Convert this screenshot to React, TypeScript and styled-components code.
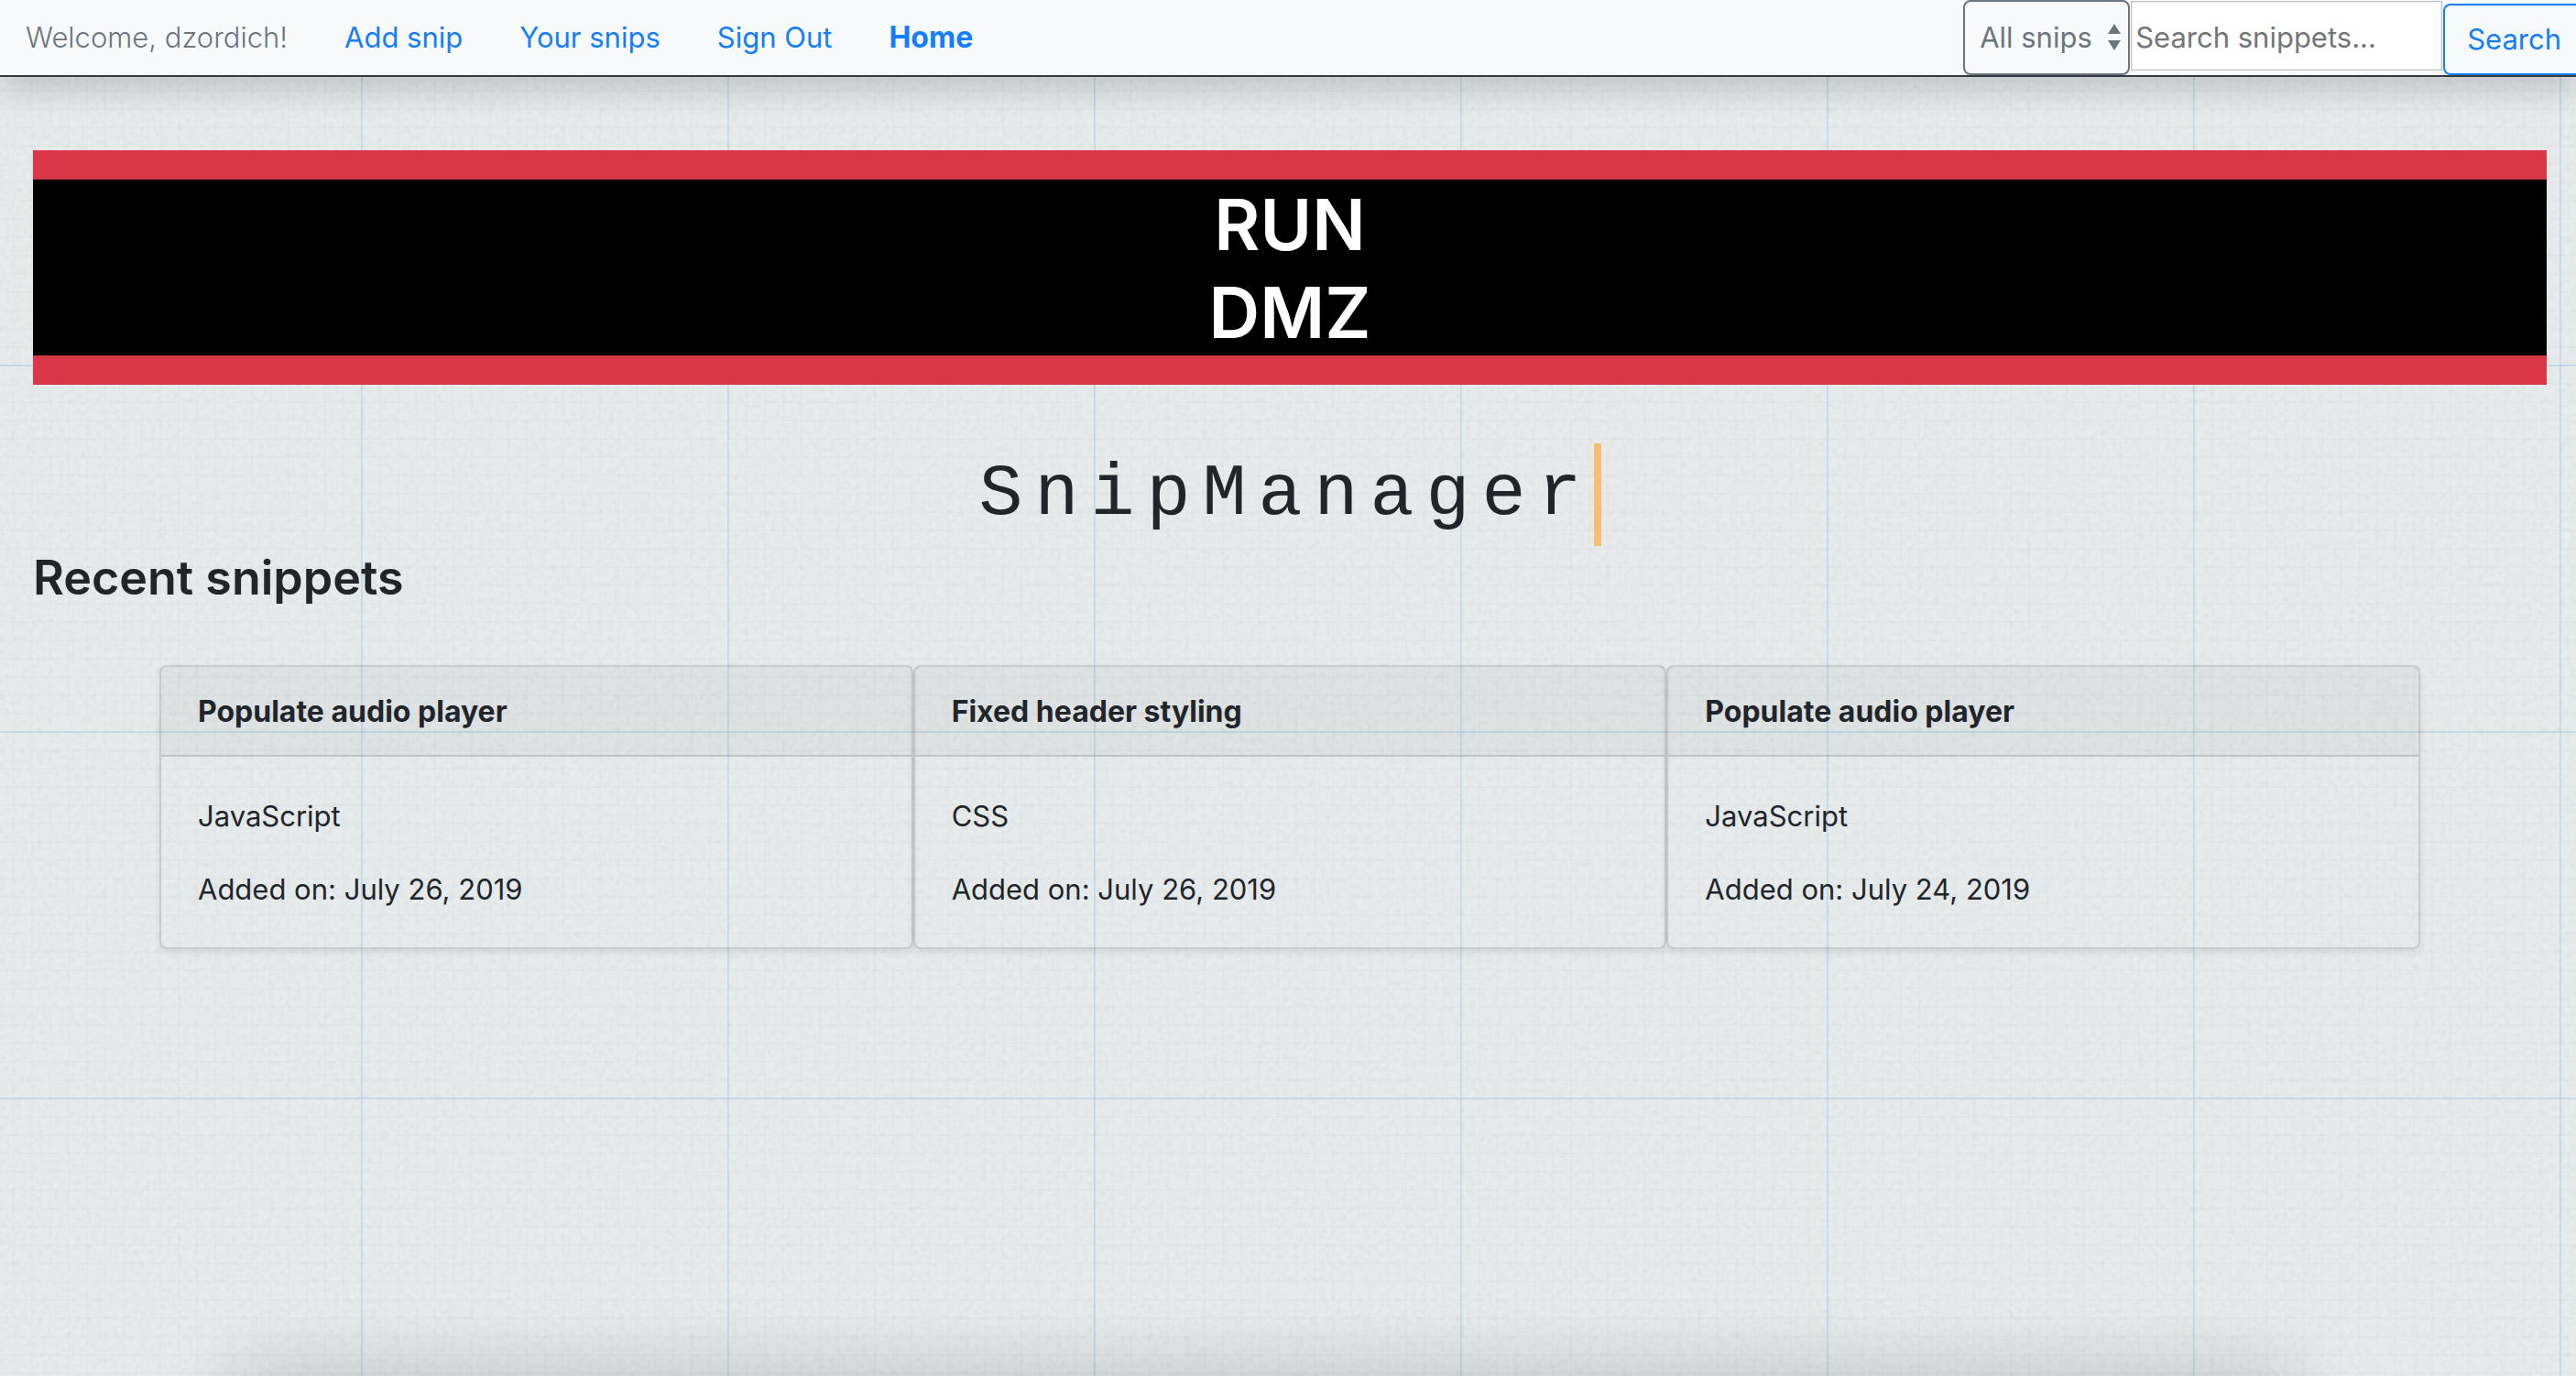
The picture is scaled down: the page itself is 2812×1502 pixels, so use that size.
import React from 'react';
import styled, { createGlobalStyle } from 'styled-components';

const GlobalStyle = createGlobalStyle`
  *, *::before, *::after { box-sizing: border-box; }
  body {
    margin: 0;
    color: #212529;
    font-family: Inter, "Liberation Sans", sans-serif;
    font-size: 31px;
    line-height: 48px;
    background-color: #e7ebec;
  }
`;

const Page = styled.div`
  display: flex;
  flex-direction: column;
  position: relative;
  isolation: isolate;
  min-height: 100vh;
  overflow: hidden;
  background-image:
    linear-gradient(to right, rgba(150, 195, 230, 0.35) 2px, transparent 2px),
    linear-gradient(to bottom, rgba(150, 195, 230, 0.4) 2px, transparent 2px),
    linear-gradient(to right, rgba(120, 140, 150, 0.03) 2px, transparent 2px),
    linear-gradient(to bottom, rgba(120, 140, 150, 0.04) 2px, transparent 2px);
  background-size: 400px 400px, 400px 400px, 20px 20px, 20px 20px;
  background-position: 394px 0, 0 398px, 14px 0, 0 18px;
`;

const PaperGrain = styled.svg`
  position: absolute;
  inset: 0;
  z-index: -1;
  width: 100%;
  height: 100%;
  pointer-events: none;
`;

const Navbar = styled.nav`
  display: flex;
  align-items: flex-start;
  justify-content: space-between;
  padding-left: 28px;
  background: #f8f9fa;
  border-bottom: 2px solid #343a40;
  box-shadow: 0 16px 32px rgba(0, 0, 0, 0.15);
`;

const NavLinks = styled.div`
  display: flex;
  align-items: center;
  gap: 62px;
  padding: 17px 0 15px;
`;

const Welcome = styled.span`
  color: #6c757d;
  font-weight: 300;
`;

const NavLink = styled.a<{ $strong?: boolean }>`
  color: #147efb;
  font-size: ${(p) => (p.$strong ? 32 : 31)}px;
  font-weight: ${(p) => (p.$strong ? 700 : 400)};
  text-decoration: none;
`;

const SearchForm = styled.form`
  display: flex;
  align-items: flex-start;
`;

const SelectWrap = styled.div`
  display: flex;
  position: relative;
`;

const ScopeSelect = styled.select`
  appearance: none;
  width: 182px;
  height: 82px;
  padding: 0 16px;
  border: 2px solid #6c757d;
  border-radius: 8px;
  background: transparent;
  color: #6c757d;
  font: inherit;
`;

const SelectArrows = styled.svg`
  position: absolute;
  right: 10px;
  top: 26px;
  width: 14px;
  height: 30px;
  fill: #6c757d;
  pointer-events: none;
`;

const SearchInput = styled.input`
  width: 340px;
  height: 76px;
  margin: 1px 1px 0;
  padding: 2px 4px 0;
  border: 1px solid #bfc1c1;
  background: #fff;
  box-shadow: inset 0 0 0 1px #ececec;
  color: #212529;
  font: inherit;
  &::placeholder { color: #757575; opacity: 1; }
`;

const SearchButton = styled.button`
  height: 78px;
  margin-top: 4px;
  padding: 0 16px 0 24px;
  border: 2px solid #147efb;
  border-right: 0;
  border-radius: 8px 0 0 8px;
  background: transparent;
  color: #147efb;
  font: inherit;
`;

const Main = styled.main`
  display: flex;
  flex-direction: column;
  flex: 1;
  padding: 80px 32px 0 36px;
`;

const Banner = styled.header`
  border: solid #d93648;
  border-width: 32px 0;
  background: #000;
  color: #fff;
  text-align: center;
`;

const BannerLine = styled.h1`
  margin: 0;
  padding-top: 2px;
  font-size: 77px;
  line-height: 94px;
  font-weight: 600;
`;

const Typewriter = styled.h1`
  align-self: center;
  margin: 64px 0 0;
  border-right: 8px solid #f4bf75;
  font-family: "Liberation Mono", monospace;
  font-size: 80px;
  line-height: 112px;
  font-weight: 400;
  letter-spacing: 13px;
`;

const SectionTitle = styled.h2`
  margin: 0;
  padding-top: 2px;
  font-size: 52px;
  line-height: 66px;
  font-weight: 600;
`;

const CardDeck = styled.section`
  display: grid;
  grid-template-columns: repeat(3, 1fr);
  padding: 62px 138px 0;
`;

const Card = styled.article`
  border: 2px solid rgba(0, 0, 0, 0.125);
  border-radius: 8px;
  box-shadow: 0 4px 8px rgba(0, 0, 0, 0.075);
`;

const CardHeader = styled.h3`
  margin: 0;
  padding: 25px 40px 23px;
  background: rgba(0, 0, 0, 0.03);
  border-bottom: 2px solid rgba(0, 0, 0, 0.125);
  font-size: 32px;
  line-height: 48px;
  font-weight: 700;
`;

const CardBody = styled.div`
  display: flex;
  flex-direction: column;
  gap: 32px;
  padding: 41px 40px 39px;
`;

const CardText = styled.p`
  margin: 0;
`;

const BottomShade = styled.footer`
  height: 100px;
  margin: 0 11% -100px 9%;
  box-shadow: 0 0 88px rgba(0, 0, 0, 0.18);
`;

const snippets = [
  { title: 'Populate audio player', language: 'JavaScript', added: 'July 26, 2019' },
  { title: 'Fixed header styling', language: 'CSS', added: 'July 26, 2019' },
  { title: 'Populate audio player', language: 'JavaScript', added: 'July 24, 2019' },
];

export default function App() {
  return (
    <Page>
      <GlobalStyle />
      <PaperGrain aria-hidden="true">
        <filter id="grain" x="0" y="0" width="100%" height="100%">
          <feTurbulence type="fractalNoise" baseFrequency="0.17" numOctaves="3" seed="4" />
          <feColorMatrix values="0 0 0 0 0.45  0 0 0 0 0.41  0 0 0 0 0.38  0.25 0 0 0 -0.1" />
        </filter>
        <rect width="100%" height="100%" filter="url(#grain)" />
      </PaperGrain>
      <Navbar>
        <NavLinks>
          <Welcome>Welcome, dzordich!</Welcome>
          <NavLink href="#add">Add snip</NavLink>
          <NavLink href="#yours">Your snips</NavLink>
          <NavLink href="#signout">Sign Out</NavLink>
          <NavLink href="#home" $strong>Home</NavLink>
        </NavLinks>
        <SearchForm onSubmit={(e) => e.preventDefault()}>
          <SelectWrap>
            <ScopeSelect aria-label="Search scope">
              <option>All snips</option>
            </ScopeSelect>
            <SelectArrows viewBox="0 0 14 30" aria-hidden="true">
              <path d="M7 0 14 11H0zM0 18h14L7 29z" />
            </SelectArrows>
          </SelectWrap>
          <SearchInput type="text" aria-label="Search snippets" placeholder="Search snippets..." />
          <SearchButton type="submit">Search</SearchButton>
        </SearchForm>
      </Navbar>
      <Main>
        <Banner>
          <BannerLine>RUN</BannerLine>
          <BannerLine>DMZ</BannerLine>
        </Banner>
        <Typewriter>SnipManager</Typewriter>
        <SectionTitle>Recent snippets</SectionTitle>
        <CardDeck>
          {snippets.map((s, i) => (
            <Card key={i}>
              <CardHeader>{s.title}</CardHeader>
              <CardBody>
                <CardText>{s.language}</CardText>
                <CardText>Added on: {s.added}</CardText>
              </CardBody>
            </Card>
          ))}
        </CardDeck>
      </Main>
      <BottomShade />
    </Page>
  );
}
